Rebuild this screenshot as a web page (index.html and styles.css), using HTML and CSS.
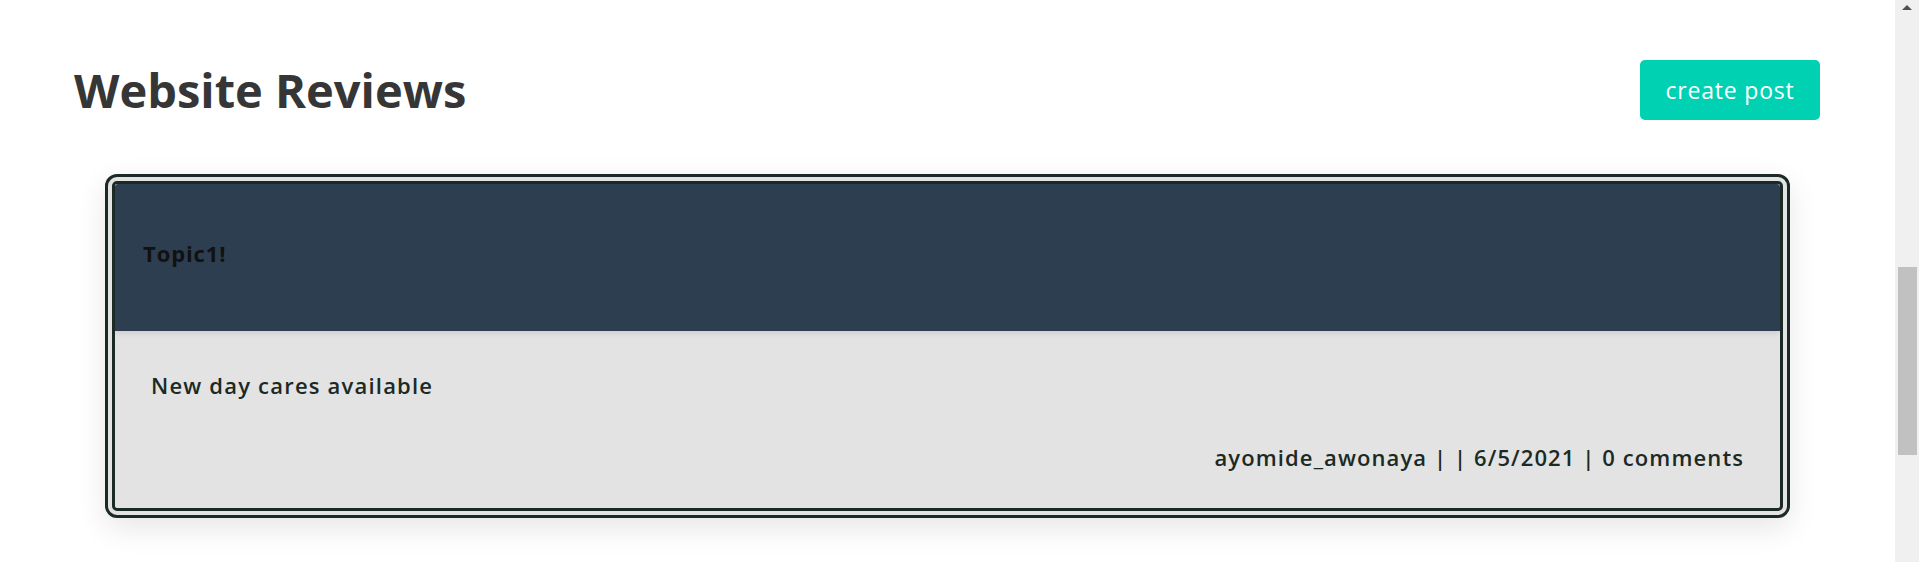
FILE: index.html
```html
<!DOCTYPE html>
<html lang="en">
<head>
<meta charset="utf-8">
<title>Website Reviews</title>
<link rel="stylesheet" href="styles.css">
</head>
<body>
<div class="window">
  <main class="page">
    <header class="page-header">
      <h1 class="title">Website Reviews</h1>
      <button class="btn-primary" type="button">create post</button>
    </header>
    <article class="card">
      <div class="card-header">
        <p class="card-title">Topic1!</p>
      </div>
      <div class="card-body">
        <p class="card-text">New day cares available</p>
        <p class="card-meta">ayomide_awonaya | | 6/5/2021 | 0 comments</p>
      </div>
    </article>
  </main>
  <div class="scrollbar">
    <span class="scroll-arrow"></span>
    <div class="scroll-track">
      <span class="scroll-thumb"></span>
    </div>
  </div>
</div>
</body>
</html>
```

FILE: styles.css
```css
html, body {
  margin: 0;
  padding: 0;
  height: 100%;
  overflow: hidden;
  background: #ffffff;
}

body {
  font-family: "Open Sans", "DejaVu Sans", sans-serif;
}

.window {
  display: flex;
  height: 562px;
}

.page {
  flex: 1;
  min-width: 0;
  padding-top: 60px;
}

.page-header {
  display: flex;
  justify-content: space-between;
  align-items: center;
  height: 60px;
  padding: 0 75px 0 74px;
}

.title {
  margin: 0;
  font-size: 47px;
  font-weight: 700;
  color: #363636;
}

.btn-primary {
  width: 180px;
  height: 60px;
  border: none;
  border-radius: 5px;
  background: #00d1b2;
  color: #ffffff;
  font-family: inherit;
  font-size: 23px;
  font-weight: 500;
  letter-spacing: 0.8px;
  padding: 0;
  cursor: pointer;
}

.card {
  margin: 54px 105px 0 105px;
  height: 344px;
  box-sizing: border-box;
  border: 10px double #1b2a24;
  border-radius: 12px;
  background: #e3e3e3;
  box-shadow: 0 10px 30px rgba(0, 0, 0, 0.10);
  display: flex;
  flex-direction: column;
  overflow: hidden;
}

.card-header {
  height: 147px;
  flex: none;
  display: flex;
  align-items: center;
  padding-left: 28px;
  padding-bottom: 10px;
  box-sizing: border-box;
  background: #2d3e50;
  box-shadow: 0 2px 6px rgba(0, 0, 0, 0.10);
  border-radius: 3px 3px 0 0;
  position: relative;
}

.card-title {
  margin: 0;
  font-size: 22px;
  font-weight: 700;
  letter-spacing: 0.9px;
  color: #111111;
}

.card-body {
  flex: 1;
  display: flex;
  flex-direction: column;
  padding: 39px 36px 0 36px;
  color: #1b2a24;
}

.card-text {
  margin: 0;
  font-size: 22px;
  font-weight: 600;
  letter-spacing: 1.2px;
  line-height: 30px;
}

.card-meta {
  margin: 42px 0 0 0;
  font-size: 22px;
  font-weight: 600;
  letter-spacing: 1.1px;
  line-height: 30px;
  text-align: right;
}

.scrollbar {
  width: 24px;
  flex: none;
  background: #f0f0f0;
  display: flex;
  flex-direction: column;
  align-items: center;
}

.scroll-arrow {
  margin-top: 5px;
  width: 0;
  height: 0;
  border-left: 5px solid transparent;
  border-right: 5px solid transparent;
  border-bottom: 5px solid #505050;
}

.scroll-track {
  flex: 1;
  width: 100%;
  display: flex;
  flex-direction: column;
  align-items: center;
  padding-top: 257px;
  box-sizing: border-box;
}

.scroll-thumb {
  width: 19px;
  height: 188px;
  background: #c1c1c1;
}
```
